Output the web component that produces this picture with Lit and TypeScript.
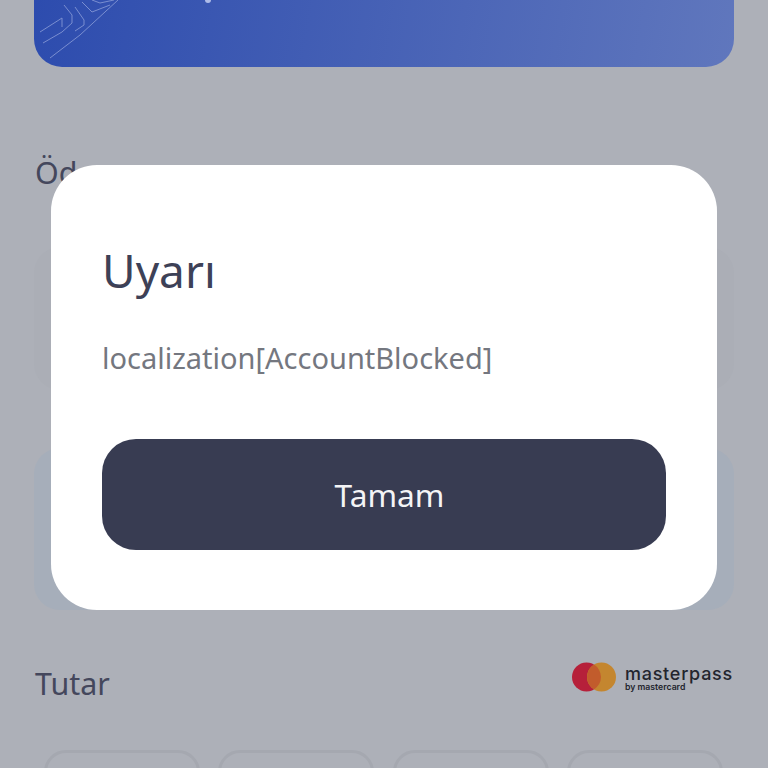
import { LitElement, html, css, svg } from "lit";
import { customElement } from "lit/decorators.js";

@customElement("app-root")
export class AppRoot extends LitElement {
  static styles = css`
    :host {
      display: block;
      position: relative;
      width: 768px;
      height: 768px;
      overflow: hidden;
      background: #adb0b8;
      font-family: "Noto Sans", sans-serif;
    }
    .page {
      display: flex;
      flex-direction: column;
      padding: 0 34px;
    }
    .banner {
      position: relative;
      height: 67px;
      border-radius: 0 0 28px 28px;
      background: linear-gradient(100deg, #2d4cae 0%, #6077bd 100%);
      overflow: hidden;
    }
    .circuit {
      position: absolute;
      left: 0;
      bottom: 0;
      width: 100px;
      height: 67px;
    }
    .tail {
      position: absolute;
      left: 171px;
      top: 0;
      width: 6px;
      height: 3px;
      border-radius: 0 0 3px 3px;
      background: #aebce8;
    }
    .label {
      color: #44475c;
      font-size: 30.4px;
      line-height: 44px;
    }
    .method-label {
      margin-top: 84px;
      margin-left: 1px;
    }
    .card {
      height: 143px;
      margin-top: 52px;
      border-radius: 26px;
      background: #abaeb6;
    }
    .card.alt {
      height: 162px;
      margin-top: 58px;
      background: #a6aeba;
    }
    .amount-row {
      display: flex;
      justify-content: space-between;
      align-items: center;
      margin-top: 52px;
      height: 44px;
      padding-left: 1px;
    }
    .mp {
      display: flex;
      align-items: center;
      gap: 9px;
      margin-right: 1px;
      margin-top: -15px;
    }
    .mp svg {
      width: 44px;
      height: 30px;
    }
    .mp-text {
      display: flex;
      flex-direction: column;
      margin-top: 3px;
      color: #23252e;
      font-family: "Inter", sans-serif;
    }
    .mp-name {
      font-size: 18px;
      line-height: 18px;
      font-weight: 500;
      letter-spacing: 0.75px;
    }
    .mp-by {
      font-size: 8.7px;
      line-height: 9px;
      font-weight: 600;
    }
    .chips {
      display: grid;
      grid-template-columns: repeat(4, 156px);
      gap: 18.33px;
      margin: 44px 0 0 10px;
    }
    .chip {
      height: 80px;
      box-sizing: border-box;
      border: 3px solid #a5a8b0;
      border-radius: 22px;
    }
    .modal {
      position: absolute;
      left: 51px;
      top: 165px;
      width: 666px;
      height: 445px;
      box-sizing: border-box;
      padding: 72px 51px 60px;
      display: flex;
      flex-direction: column;
      background: #fff;
      border-radius: 46px;
    }
    .title {
      color: #3d4157;
      font-size: 46px;
      line-height: 66px;
    }
    .msg {
      margin-top: 35px;
      color: #74777f;
      font-size: 29px;
      line-height: 40px;
    }
    .btn {
      margin-top: auto;
      height: 111px;
      box-sizing: border-box;
      padding-left: 11px;
      border-radius: 34px;
      background: #383c52;
      color: #f4f4f6;
      font-size: 31.7px;
      display: flex;
      align-items: center;
      justify-content: center;
    }
  `;

  render() {
    return html`
      <div class="page">
        <div class="banner">
          <svg class="circuit" viewBox="0 0 100 67" fill="none" stroke="#7a8ed0" stroke-width="1">
            ${svg`<path d="M6 32 L28 18 L28 27 M9 43 L28 32 L38 23 L38 15 L30 5 M16 58 L46 35 L84 0 M41 7 L50 20 L50 25 L41 31 M48 2 L58 12 L76 5 M58 0 L66 3 L80 0"/>`}
          </svg>
          <div class="tail"></div>
        </div>
        <div class="label method-label">Ödeme</div>
        <div class="card"></div>
        <div class="card alt"></div>
        <div class="amount-row">
          <div class="label">Tutar</div>
          <div class="mp">
            <svg viewBox="0 0 44 30">
              <circle cx="14.5" cy="15" r="14.5" fill="#b6203a"/>
              <circle cx="29.5" cy="15" r="14.5" fill="#c4862f"/>
              <path d="M22 2.6a14.5 14.5 0 0 1 0 24.8a14.5 14.5 0 0 1 0-24.8z" fill="#c25c2c"/>
            </svg>
            <div class="mp-text">
              <span class="mp-name">masterpass</span>
              <span class="mp-by">by mastercard</span>
            </div>
          </div>
        </div>
        <div class="chips">
          <div class="chip"></div><div class="chip"></div><div class="chip"></div><div class="chip"></div>
        </div>
      </div>
      <div class="modal">
        <div class="title">Uyarı</div>
        <div class="msg">localization[AccountBlocked]</div>
        <div class="btn">Tamam</div>
      </div>
    `;
  }
}
